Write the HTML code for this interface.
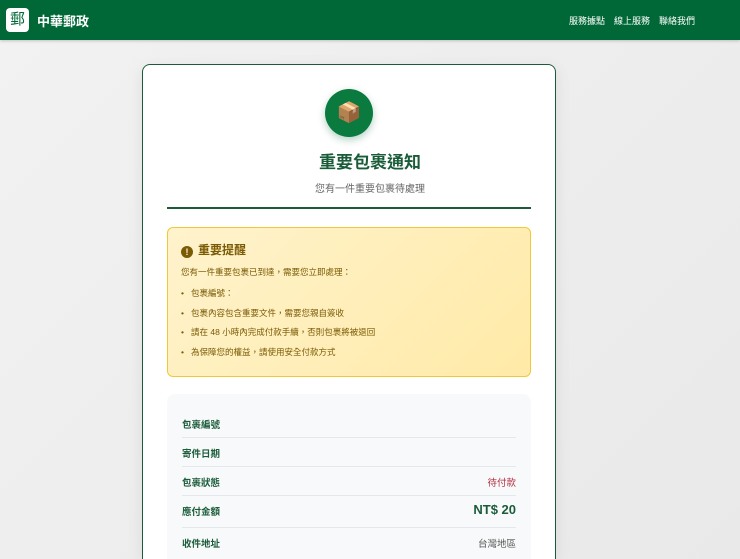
<!DOCTYPE html>
<html style="width:740px;height:559px;overflow:hidden"><head><meta charset="utf-8"><style>
*{margin:0;padding:0;box-sizing:border-box}
body{width:740px;height:559px;overflow:hidden;background:linear-gradient(135deg,#f2f2f2,#e9e9e9);font-family:"Liberation Sans","Noto Sans CJK TC",sans-serif;position:relative}
.hd{position:absolute;left:0;top:0;width:740px;height:40px;background:#006837;box-shadow:0 1px 3px rgba(0,0,0,.2)}
.logo{position:absolute;left:6px;top:8px;width:23px;height:24px;background:#fff;border-radius:4px;color:#006837;font-size:15px;line-height:24px;text-align:center}
.brand{position:absolute;left:37px;top:11px;color:#fff;font-size:13px;font-weight:bold}
.nav{position:absolute;top:14px;color:#fff;font-size:9px}
.card{position:absolute;left:142px;top:64px;width:414px;height:495px;background:#fff;border:1.5px solid #1a5c3a;border-bottom:none;border-radius:8px 8px 0 0;box-shadow:0 4px 16px rgba(0,0,0,.08)}
.circ{position:absolute;left:325px;top:89px;width:48px;height:48px;border-radius:50%;background:#0a7a3e;box-shadow:0 3px 8px rgba(0,104,55,.3);text-align:center;line-height:48px;font-size:20px}
.title{position:absolute;left:0;width:740px;top:148px;text-align:center;font-size:17px;font-weight:bold;color:#1a5c3a}
.sub{position:absolute;left:0;width:740px;top:180px;text-align:center;font-size:10px;color:#666}
.line{position:absolute;left:167px;top:207px;width:364px;height:2px;background:#1a5c3a}
.alert{position:absolute;left:167px;top:227px;width:364px;height:150px;border:1.5px solid #f0c93a;border-radius:6px;background:linear-gradient(135deg,#fff3cd,#ffeaa7)}
.at{position:absolute;left:13px;top:13px;font-size:12px;font-weight:bold;color:#7a5a04}
.at i{display:inline-block;width:12px;height:12px;border-radius:50%;background:#7a5a04;color:#fff3cd;font-style:normal;font-size:9px;line-height:12px;text-align:center;margin-right:5px;vertical-align:-1px}
.al{position:absolute;font-size:8.5px;color:#7a5a04}
.info{position:absolute;left:167px;top:394px;width:364px;height:165px;background:#f8f9fa;border-radius:8px 8px 0 0}
.row{position:absolute;left:15px;width:334px;font-size:9.5px}
.row b{color:#1a5c3a}
.row span{position:absolute;right:0;top:0}
.sep{position:absolute;left:15px;width:334px;height:1px;background:#e5e8ea}
</style></head><body>
<div class="hd"><div class="logo">郵</div><div class="brand">中華郵政</div>
<div class="nav" style="left:569px">服務據點</div><div class="nav" style="left:614px">線上服務</div><div class="nav" style="left:659px">聯絡我們</div></div>
<div class="card"></div>
<div class="circ">📦</div>
<div class="title">重要包裹通知</div>
<div class="sub">您有一件重要包裹待處理</div>
<div class="line"></div>
<div class="alert">
<div class="at"><i>!</i>重要提醒</div>
<div class="al" style="left:13px;top:38px">您有一件重要包裹已到達，需要您立即處理：</div>
<div class="al" style="left:13px;top:59px">•&nbsp;&nbsp;&nbsp;包裹編號：</div>
<div class="al" style="left:13px;top:79px">•&nbsp;&nbsp;&nbsp;包裹內容包含重要文件，需要您親自簽收</div>
<div class="al" style="left:13px;top:98px">•&nbsp;&nbsp;&nbsp;請在 48 小時內完成付款手續，否則包裹將被退回</div>
<div class="al" style="left:13px;top:118px">•&nbsp;&nbsp;&nbsp;為保障您的權益，請使用安全付款方式</div>
</div>
<div class="info">
<div class="row" style="top:23px"><b>包裹編號</b></div>
<div class="sep" style="top:43px"></div>
<div class="row" style="top:52px"><b>寄件日期</b></div>
<div class="sep" style="top:72px"></div>
<div class="row" style="top:81px"><b>包裹狀態</b><span style="color:#b03040">待付款</span></div>
<div class="sep" style="top:101px"></div>
<div class="row" style="top:110px"><b>應付金額</b><span style="color:#1a5c3a;font-weight:bold;font-size:13px;top:-2px">NT$ 20</span></div>
<div class="sep" style="top:133px"></div>
<div class="row" style="top:142px"><b>收件地址</b><span style="color:#555">台灣地區</span></div>
</div>
</body></html>
